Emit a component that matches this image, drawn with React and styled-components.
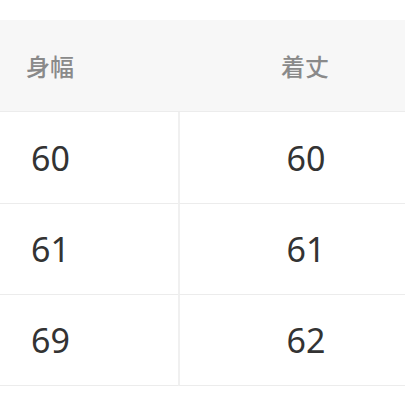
import React from "react";
import styled, { createGlobalStyle } from "styled-components";

const Global = createGlobalStyle`
  html, body {
    margin: 0;
    padding: 0;
    background: #fff;
    overflow: hidden;
  }
`;

const Page = styled.div`
  width: 405px;
  height: 405px;
  overflow: hidden;
  padding-top: 20px;
  box-sizing: border-box;
`;

const Table = styled.div`
  width: 432px;
  display: grid;
  grid-template-columns: 178px 254px;
`;

const HeadCell = styled.div`
  background: #f7f7f7;
  height: 91px;
  border-bottom: 1px solid #ececec;
  display: flex;
  align-items: center;
  justify-content: ${p => (p.center ? "center" : "flex-start")};
  padding-left: ${p => (p.center ? "0" : "26px")};
  font-family: "Noto Sans CJK JP", "Noto Sans", sans-serif;
  font-size: 24px;
  font-weight: 500;
  color: #8a8a8a;
`;

const Cell = styled.div`
  height: ${p => p.h}px;
  border-bottom: 1px solid #ececec;
  border-left: ${p => (p.center ? "2px solid #f0f0f0" : "none")};
  display: flex;
  align-items: center;
  justify-content: ${p => (p.center ? "center" : "flex-start")};
  padding-left: ${p => (p.center ? "0" : "31px")};
  font-family: "Noto Sans", "Liberation Sans", sans-serif;
  font-size: 34px;
  color: #333;
`;

const rows = [
  ["60", "60", 91],
  ["61", "61", 90],
  ["69", "62", 90]
];

export default function App() {
  return (
    <Page>
      <Global />
      <Table>
        <HeadCell>身幅</HeadCell>
        <HeadCell center>着丈</HeadCell>
        {rows.map(([a, b, h], i) => (
          <React.Fragment key={i}>
            <Cell h={h}>{a}</Cell>
            <Cell h={h} center>
              {b}
            </Cell>
          </React.Fragment>
        ))}
      </Table>
    </Page>
  );
}
